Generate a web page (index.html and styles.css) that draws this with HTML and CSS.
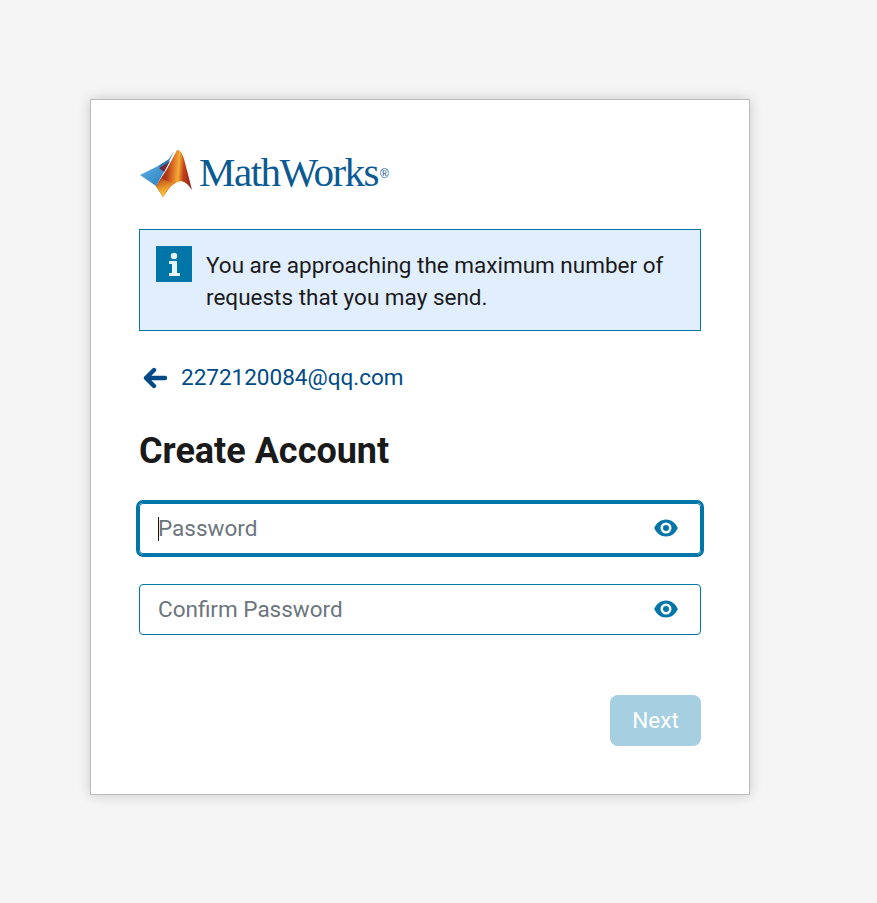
FILE: index.html
```html
<!DOCTYPE html>
<html lang="en">
<head>
<meta charset="utf-8">
<title>Create Account</title>
<link rel="stylesheet" href="styles.css">
</head>
<body>
<main class="card">
  <div class="logo">
    <svg class="membrane" width="58" height="50" viewBox="0 0 58 50" aria-hidden="true">
      <defs>
        <linearGradient id="g1" x1="0" y1="0" x2="1" y2="0.1">
          <stop offset="0" stop-color="#6d1f1a"/>
          <stop offset="0.35" stop-color="#b23a18"/>
          <stop offset="0.55" stop-color="#e8802a"/>
          <stop offset="0.66" stop-color="#f0ad38"/>
          <stop offset="0.8" stop-color="#c6401a"/>
          <stop offset="1" stop-color="#92281a"/>
        </linearGradient>
        <linearGradient id="g2" x1="0" y1="0" x2="1" y2="1">
          <stop offset="0" stop-color="#58b0e6"/>
          <stop offset="1" stop-color="#2f7fbe"/>
        </linearGradient>
        <linearGradient id="g3" x1="0.2" y1="0" x2="0.5" y2="1">
          <stop offset="0" stop-color="#b8481c"/>
          <stop offset="0.6" stop-color="#eea32c"/>
          <stop offset="1" stop-color="#f8d743"/>
        </linearGradient>
      </defs>
      <path d="M1 27 L19 18 L25 24 L17 38 Z" fill="url(#g2)"/>
      <path d="M19 18 L30 11 L35 3 L25 24 Z" fill="#2f7ab8"/>
      <path d="M20 20 L27 16 L31 13 L25 24 Z" fill="#6f2a3a"/>
      <path d="M17 38 L28 21 L38 2 Q42 1 45 11 Q49 26 53 42 Q48 34 42 33 Q33 34 24 49 Z" fill="url(#g1)"/>
      <path d="M17 38 L23 30 Q31 36 38 33 Q30 38 24 49 Z" fill="url(#g3)"/>
    </svg>
    <span class="wordmark">MathWorks</span><span class="reg">®</span>
  </div>

  <div class="alert">
    <span class="alert-icon" aria-hidden="true">
      <svg width="36" height="36" viewBox="0 0 36 36">
        <circle cx="18" cy="10" r="3.2" fill="#e8f2fa"/>
        <path d="M13 15 H21 V27 H24 V30 H13 V27 H16 V18 H13 Z" fill="#e8f2fa"/>
      </svg>
    </span>
    <p class="alert-text">You are approaching the maximum number of requests that you may send.</p>
  </div>

  <a class="back" href="#">
    <svg width="26" height="22" viewBox="0 0 26 22" aria-hidden="true">
      <path d="M12 3 L4 11 L12 19 M4 11 H23" fill="none" stroke="#004b87" stroke-width="4.4" stroke-linecap="round" stroke-linejoin="round"/>
    </svg>
    <span>2272120084@qq.com</span>
  </a>

  <h1 class="title">Create Account</h1>

  <div class="field field-focus">
    <span class="caret"></span><span class="placeholder">Password</span>
    <svg class="eye" width="24" height="18" viewBox="0 0 24 18" aria-hidden="true">
      <path fill-rule="evenodd" d="M12 0.5 C17.5 0.5 21.5 4 23.8 9 C21.5 14 17.5 17.5 12 17.5 C6.500 17.500 2.500 14 0.200 9 C2.500 4 6.500 0.500 12 0.500 Z M12 3.500 A5.500 5.500 0 1 0 12 14.500 A5.500 5.500 0 1 0 12 3.500 Z" fill="#0076a8"/>
      <circle cx="12" cy="9" r="3" fill="#0076a8"/>
    </svg>
  </div>

  <div class="field">
    <span class="placeholder">Confirm Password</span>
    <svg class="eye" width="24" height="18" viewBox="0 0 24 18" aria-hidden="true">
      <path fill-rule="evenodd" d="M12 0.5 C17.5 0.5 21.5 4 23.8 9 C21.5 14 17.5 17.5 12 17.5 C6.500 17.500 2.500 14 0.200 9 C2.500 4 6.500 0.500 12 0.500 Z M12 3.500 A5.500 5.500 0 1 0 12 14.500 A5.500 5.500 0 1 0 12 3.500 Z" fill="#0076a8"/>
      <circle cx="12" cy="9" r="3" fill="#0076a8"/>
    </svg>
  </div>

  <div class="actions">
    <button class="next" type="button">Next</button>
  </div>
</main>
</body>
</html>
```
FILE: styles.css
```css
* { box-sizing: border-box; }
html, body { margin: 0; height: 100%; }
body {
  background: #f5f5f5;
  font-family: Roboto, "Liberation Sans", sans-serif;
  padding: 99px 0 0 90px;
  overflow: hidden;
}
.card {
  width: 660px;
  height: 696px;
  background: #fff;
  border: 1px solid #bbb;
  box-shadow: 0 0 12px rgba(0, 0, 0, 0.18);
  padding: 50px 48px 0;
}
.logo {
  display: flex;
  align-items: flex-start;
  height: 48px;
}
.membrane { flex: none; margin-top: -2px; margin-right: 2px; }
.wordmark {
  font-family: "Liberation Serif", serif;
  font-size: 41px;
  line-height: 44px;
  letter-spacing: -1.5px;
  color: #0b5a94;
}
.reg {
  font-family: "Liberation Sans", sans-serif;
  font-size: 12px;
  line-height: 14px;
  margin: 17px 0 0 2px;
  color: #0b5a94;
}
.alert {
  margin-top: 31px;
  height: 102px;
  background: #e1eefd;
  border: 1px solid #0076a8;
  padding: 16px 16px 0;
  display: flex;
  gap: 14px;
}
.alert-icon {
  flex: none;
  width: 36px;
  height: 36px;
  background: #0076a8;
}
.alert-icon svg { display: block; }
.alert-text {
  margin: 3px 0 0;
  font-size: 22.5px;
  line-height: 32px;
  color: #1a1a1a;
}
.back {
  display: flex;
  align-items: center;
  gap: 13px;
  margin-top: 30px;
  padding-left: 3px;
  height: 32px;
  font-size: 22.5px;
  color: #004b87;
  text-decoration: none;
}
.back svg { margin-top: 2px; }
.title {
  margin: 38px 0 0;
  font-size: 36px;
  line-height: 40px;
  font-weight: 700;
  color: #1a1a1a;
}
.field {
  display: flex;
  align-items: center;
  height: 51px;
  margin-top: 30px;
  padding: 0 22px 0 18px;
  border: 1px solid #0076a8;
  border-radius: 4px;
  font-size: 22.5px;
}
.field-focus {
  margin-top: 32px;
  outline: 3px solid #0076a8;
  outline-offset: 0;
  border-radius: 4px;
}
.placeholder { flex: 1; color: #6c757d; padding-bottom: 2px; }
.caret { width: 1px; height: 24px; background: #1a1a1a; }
.caret + .placeholder { margin-left: -1px; }
.eye { flex: none; margin-top: -1px; }
.actions {
  display: flex;
  justify-content: flex-end;
  margin-top: 60px;
}
.next {
  width: 91px;
  height: 51px;
  border: 0;
  border-radius: 8px;
  padding: 0 0 2px;
  background: #a6cfe2;
  color: #fff;
  font-family: inherit;
  font-size: 22.5px;
  font-weight: 400;
}
```
